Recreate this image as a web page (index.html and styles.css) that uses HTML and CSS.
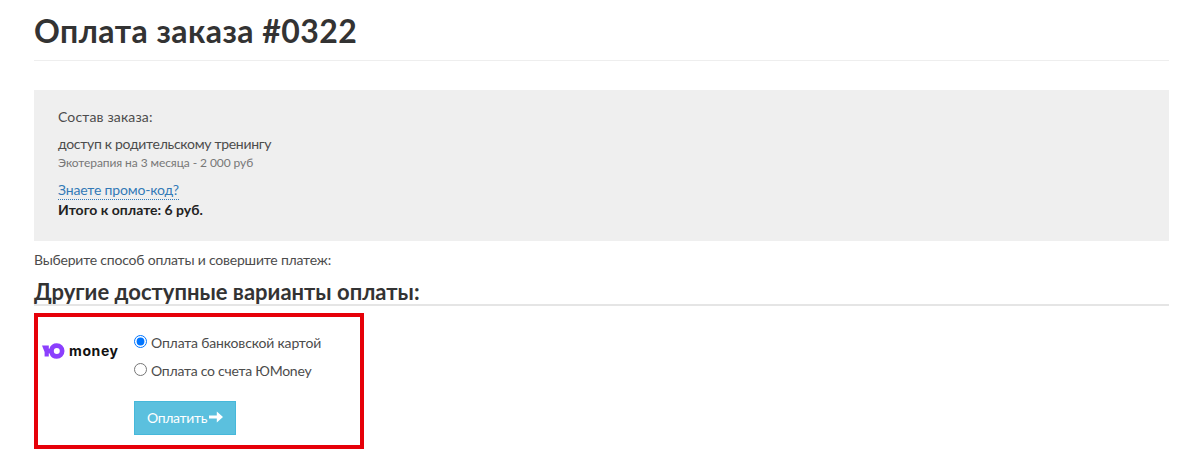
FILE: index.html
```html
<!DOCTYPE html>
<html lang="ru">
<head>
    <meta charset="UTF-8">
    <title>Оплата заказа #0322</title>
    <link rel="stylesheet" href="styles.css">
</head>
<body>
<div class="container">
    <h1 class="page-title">Оплата заказа #0322</h1>
    <div class="order">
        <p class="order-label">Состав заказа:</p>
        <p class="order-name">доступ к родительскому тренингу</p>
        <p class="order-offer">Экотерапия на 3 месяца - 2 000 руб</p>
        <a href="#" class="promo">Знаете промо-код?</a>
        <p class="total">Итого к оплате: 6 руб.</p>
    </div>
    <p class="hint">Выберите способ оплаты и совершите платеж:</p>
    <h2 class="pay-title">Другие доступные варианты оплаты:</h2>
    <div class="pay">
        <div class="logo">
            <svg class="logo-mark" viewBox="0 0 23 16" width="23" height="16">
                <path d="M0 2.6h6.8v10.8H2.6V9z" fill="#8b3ffd"/>
                <path fill-rule="evenodd" d="M14.8 0.3a7.7 7.7 0 1 1 0 15.4a7.7 7.7 0 0 1-7.4-5.5H6V5.8h1.4A7.7 7.7 0 0 1 14.8 0.3zM14.8 5a3 3 0 1 0 0 6a3 3 0 0 0 0-6z" fill="#8b3ffd"/>
            </svg>
            <span class="logo-text">money</span>
        </div>
        <form class="pay-form">
            <label class="option"><input type="radio" name="type" checked><span class="card">Оплата банковской картой</span></label>
            <label class="option"><input type="radio" name="type"><span class="wallet">Оплата со счета ЮMoney</span></label>
            <button type="button" class="btn">Оплатить
                <svg viewBox="0 0 14 12" width="14" height="12"><path d="M0 4.6h7.8V0.5L14 6l-6.2 5.5V7.4H0z" fill="#fff"/></svg>
            </button>
        </form>
    </div>
</div>
</body>
</html>
```

FILE: styles.css
```css
*{
    margin: 0;
    padding: 0;
    box-sizing: border-box;
}
body{
    background: #fff;
    color: #4c4c4c;
    font: 14px/20px Lato, "Open Sans", sans-serif;
}
.container{
    width: 1135px;
    margin-left: 34px;
}
.page-title{
    height: 61px;
    padding-top: 11px;
    border-bottom: 1px solid #eee;
    color: #333;
    font-size: 32px;
    line-height: 40px;
    letter-spacing: .45px;
}
.order{
    height: 151px;
    margin-top: 29px;
    padding: 17px 24px 0;
    background: #efefef;
}
.order-label{
    letter-spacing: .15px;
}
.order-name{
    margin-top: 7px;
    letter-spacing: -.3px;
}
.order-offer{
    color: #777;
    font-size: 12px;
    line-height: 17px;
    letter-spacing: -.08px;
}
.promo{
    display: inline-block;
    margin-top: 10px;
    border-bottom: 1px dotted #337ab7;
    color: #337ab7;
    line-height: 18px;
    letter-spacing: -.17px;
    text-decoration: none;
}
.total{
    color: #222;
    font-weight: bold;
}
.hint{
    margin-top: 9px;
    letter-spacing: -.21px;
}
.pay-title{
    height: 36px;
    padding-top: 9px;
    border-bottom: 2px solid #e5e5e5;
    color: #333;
    font-size: 22px;
    line-height: 26px;
}
.pay{
    display: flex;
    width: 330px;
    height: 136px;
    margin-top: 7px;
    border: 4px solid #e60009;
}
.logo{
    display: flex;
    align-items: center;
    width: 96px;
    height: 16px;
    margin-top: 26px;
    padding-left: 4px;
}
.logo-text{
    margin: -1px 0 0 4px;
    color: #111;
    font: bold 14px/16px Inter, sans-serif;
    letter-spacing: .6px;
}
.pay-form{
    padding-top: 15px;
}
.option{
    display: flex;
    align-items: flex-start;
    height: 28px;
    line-height: 21px;
}
.option input{
    width: 13px;
    height: 13px;
    margin: 3px 4px 0 0;
}
.card{
    letter-spacing: -.17px;
}
.wallet{
    letter-spacing: -.25px;
}
.btn{
    display: flex;
    align-items: center;
    gap: 2px;
    width: 102px;
    height: 34px;
    margin-top: 13px;
    padding-left: 12px;
    border: 1px solid #46b8da;
    background: #5bc0de;
    color: #fff;
    font: 14px/20px Lato, "Open Sans", sans-serif;
    letter-spacing: -.35px;
}
.btn svg{
    margin-top: -2px;
}
```
